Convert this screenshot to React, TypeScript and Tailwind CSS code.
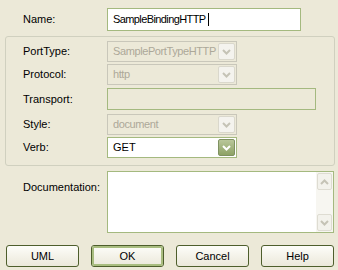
const Chevron = ({ color, up = false }: { color: string; up?: boolean }) => (
  <svg width="9" height="6" viewBox="0 0 9 6" className={up ? "rotate-180" : ""}>
    <path d="M1 1 L4.5 4.5 L8 1" fill="none" stroke={color} strokeWidth="2" />
  </svg>
);

const DisabledSelect = ({ value }: { value: string }) => (
  <div className="flex h-[21px] w-[130px] items-center border border-[#c9c7ba] bg-[#ece9d8] p-[1px]">
    <div className="flex-1 overflow-hidden whitespace-nowrap pl-[4px] tracking-[-0.4px] text-[#aca899]">{value}</div>
    <div className="flex h-full w-[17px] items-center justify-center rounded-[2px] border border-[#dad8cc] bg-[#f4f3ee]">
      <Chevron color="#c5c3b6" />
    </div>
  </div>
);

const Label = ({ children }: { children: string }) => (
  <div className="w-[84px] shrink-0">{children}</div>
);

const XpButton = ({ label, isDefault = false }: { label: string; isDefault?: boolean }) => (
  <div className="h-[22px] w-[73px] rounded-[3px] border border-[#4e5e2c] bg-gradient-to-b from-[#fdfdf9] to-[#ebe8da]">
    <div
      className={
        "flex h-full w-full items-center justify-center rounded-[2px] " +
        (isDefault ? "border-2 border-[#a9bd80]" : "")
      }
    >
      {label}
    </div>
  </div>
);

export default function App() {
  return (
    <div
      className="h-[270px] w-[338px] bg-[#ece9d8] text-[11px] text-black"
      style={{ fontFamily: '"Liberation Sans", Arial, sans-serif' }}
    >
      <div className="flex items-center pl-[23px] pt-[8px]">
        <Label>Name:</Label>
        <div className="flex h-[23px] w-[194px] items-center border border-[#a4b97f] bg-white pl-[5px]">
          <span className="tracking-[-0.6px]">SampleBindingHTTP</span>
          <span className="ml-[2px] h-[13px] w-[1px] bg-black" />
        </div>
      </div>

      <div className="ml-[5px] mt-[5px] h-[130px] w-[330px] rounded-[3px] border border-[#d0d0bf] pl-[17px] pt-[4px]">
        <div className="flex items-center">
          <Label>PortType:</Label>
          <DisabledSelect value="SamplePortTypeHTTP" />
        </div>
        <div className="mt-[2px] flex items-center">
          <Label>Protocol:</Label>
          <DisabledSelect value="http" />
        </div>
        <div className="mt-[3px] flex items-center">
          <Label>Transport:</Label>
          <div className="h-[22px] w-[209px] border border-[#a4b97f] bg-[#ece9d8]" />
        </div>
        <div className="mt-[4px] flex items-center">
          <Label>Style:</Label>
          <DisabledSelect value="document" />
        </div>
        <div className="mt-[2px] flex items-center">
          <Label>Verb:</Label>
          <div className="flex h-[21px] w-[130px] items-center border border-[#a4b97f] bg-white p-[1px]">
            <div className="flex-1 pl-[4px]">GET</div>
            <div className="flex h-full w-[17px] items-center justify-center rounded-[2px] border border-[#7f9161] bg-gradient-to-b from-[#b9c79a] to-[#8ea266]">
              <Chevron color="#ffffff" />
            </div>
          </div>
        </div>
      </div>

      <div className="mt-[5px] flex pl-[23px]">
        <div className="w-[84px] shrink-0 pt-[8px]">Documentation:</div>
        <div className="flex h-[62px] w-[227px] border border-[#a4b97f] bg-white">
          <div className="flex-1" />
          <div className="flex w-[17px] flex-col justify-between bg-[#f7f6f1] p-[1px]">
            <div className="flex h-[17px] items-center justify-center rounded-[2px] border border-[#dedcd2] bg-[#f3f2ec]">
              <Chevron color="#c5c3b6" up />
            </div>
            <div className="flex h-[17px] items-center justify-center rounded-[2px] border border-[#dedcd2] bg-[#f3f2ec]">
              <Chevron color="#c5c3b6" />
            </div>
          </div>
        </div>
      </div>

      <div className="mt-[12px] flex gap-[12px] pl-[6px]">
        <XpButton label="UML" />
        <XpButton label="OK" isDefault />
        <XpButton label="Cancel" />
        <XpButton label="Help" />
      </div>
    </div>
  );
}
